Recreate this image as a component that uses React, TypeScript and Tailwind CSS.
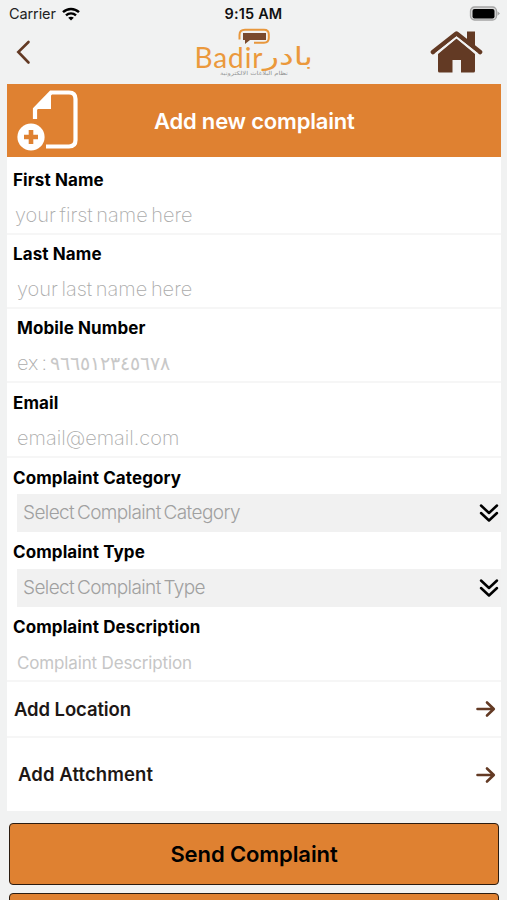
import type { ReactNode } from 'react';

type Field = {
  label: string;
  labelClass: string;
  placeholder: ReactNode;
  placeholderClass: string;
  rowClass: string;
};

const FIELDS: Field[] = [
  {
    label: 'First Name',
    labelClass: 'pl-[6px]',
    placeholder: 'your first name here',
    placeholderClass: 'pl-[8px]',
    rowClass: 'h-[77.5px] pt-[11.5px]',
  },
  {
    label: 'Last Name',
    labelClass: 'pl-[6px]',
    placeholder: 'your last name here',
    placeholderClass: 'pl-[10px] tracking-[0px]',
    rowClass: 'h-[74.5px] pt-[8.5px]',
  },
  {
    label: 'Mobile Number',
    labelClass: 'pl-[10px]',
    placeholder: (
      <>
        ex<span className="px-[3px]">:</span>
        <span className="font-['DejaVu_Sans'] text-[18.5px] font-extralight tracking-[0.15px] text-[#c8c8c8]">٩٦٦٥١٢٣٤٥٦٧٨</span>
      </>
    ),
    placeholderClass: 'pl-[10px]',
    rowClass: 'h-[74px] pt-[8px]',
  },
  {
    label: 'Email',
    labelClass: 'pl-[6px]',
    placeholder: 'email@email.com',
    placeholderClass: 'pl-[10px]',
    rowClass: 'h-[74.5px] pt-[9px]',
  },
];

const SELECTS = [
  { label: 'Complaint Category', placeholder: 'Select Complaint Category' },
  { label: 'Complaint Type', placeholder: 'Select Complaint Type' },
];

function StatusBar() {
  return (
    <div className="grid h-7 grid-cols-3 items-center pr-[6px] pl-[9px]">
      <div className="flex items-center gap-[6px]">
        <span className="text-[14.5px] tracking-[-0.1px] text-[#222]">Carrier</span>
        <svg width="18" height="14" viewBox="0 0 18 14" fill="none" stroke="#000" strokeWidth="2.4">
          <path d="M1 5.2C5.5.9 12.5.9 17 5.2" />
          <path d="M4 8.3C6.8 5.7 11.2 5.7 14 8.3" />
          <path d="M9 13.5L6.2 10.7C7.8 9.3 10.2 9.3 11.8 10.7Z" fill="#000" stroke="none" />
        </svg>
      </div>
      <span className="-ml-[3px] text-center text-[14.5px] font-semibold tracking-[0.15px] text-[#111]">9:15 AM</span>
      <svg className="justify-self-end" width="32" height="16" viewBox="0 0 32 16">
        <rect x="1.5" y="1" width="26" height="13" rx="4" fill="#d8d8d8" stroke="#a5a5a5" strokeWidth="1.3" />
        <rect x="3.5" y="3" width="22" height="9.5" rx="2" fill="#000" />
        <path d="M28.5 5.2L31 7.5L28.5 9.8Z" fill="#a5a5a5" />
      </svg>
    </div>
  );
}

function Logo() {
  return (
    <svg width="124" height="52" viewBox="192 28 124 52">
      <path
        d="M239.500 39.5V35Q239.500 29.800 245 29.800H264Q268.800 29.800 268.800 34.5V38Q268.800 42.700 264 42.700H254"
        fill="none"
        stroke="#e8973c"
        strokeWidth="2"
      />
      <path d="M243 33H266V40H250L245 44V40H243Z" fill="#7a4a2e" />
      <text x="194.5" y="67.5" fontSize="28" textLength="68" lengthAdjust="spacing" fill="#eb993c" className="font-['Lato']">
        Badir
      </text>
      <text x="263" y="65" direction="ltr" fontSize="25" textLength="50" lengthAdjust="spacingAndGlyphs" fill="#eb993c" className="font-['DejaVu_Sans']">
        بادر
      </text>
      <text x="220" y="75" direction="ltr" fontSize="5.5" textLength="68" lengthAdjust="spacingAndGlyphs" fill="#929292" className="font-['DejaVu_Sans']">
        نظام البلاغات الالكترونية
      </text>
    </svg>
  );
}

function NavBar() {
  return (
    <div className="flex h-14 items-start justify-between pr-[24px] pl-[15px]">
      <svg className="mt-[11px]" width="18" height="26" viewBox="0 0 18 26" fill="none">
        <path d="M13.5 3L3.3 13L13.5 23.5" stroke="#633a24" strokeWidth="2.6" strokeLinecap="round" />
      </svg>
      <div className="ml-[45px]">
        <Logo />
      </div>
      <svg className="mt-[1px]" width="54" height="46" viewBox="429 29 54 46">
        <path d="M467 41V31.500H475V47Z" fill="#633a24" />
        <path d="M433 52L456.5 33.5L480 52" fill="none" stroke="#633a24" strokeWidth="4.6" strokeLinecap="round" strokeLinejoin="round" />
        <path d="M438 54L456.5 38.5L475 54V71Q475 72.500 473.5 72.500H461V60H452.5V72.500H439.5Q438 72.500 438 71Z" fill="#633a24" />
        <path d="M435.5 54L456.5 37.300L477.5 54" fill="none" stroke="#f1f2f2" strokeWidth="1.7" />
      </svg>
    </div>
  );
}

function TitleBar() {
  return (
    <div className="flex h-[73px] items-center bg-[#df8131]">
      <svg width="76" height="73" viewBox="7 84 76 73">
        <path
          d="M35 119V109L51 92.5H69Q75.5 92.5 75.5 99V140Q75.5 146.5 69 146.5H46"
          fill="none"
          stroke="#fff"
          strokeWidth="4.2"
        />
        <path d="M34 109L51 91.5V109H34Z" fill="#fff" />
        <circle cx="31" cy="137" r="13.6" fill="#fff" />
        <path d="M31 130V144M24 137H38" stroke="#df8131" strokeWidth="4.6" />
      </svg>
      <h1 className="ml-[71px] pt-[1px] text-[22px] font-semibold tracking-[-0.2px] whitespace-nowrap text-white">Add new complaint</h1>
    </div>
  );
}

function FieldLabel({ children, className = '' }: { children: ReactNode; className?: string }) {
  return (
    <div className={`text-[17px] leading-[22px] font-bold tracking-[0.1px] whitespace-nowrap text-black ${className}`}>
      {children}
    </div>
  );
}

function TextField({ field }: { field: Field }) {
  return (
    <div className={`border-b-2 border-[#f6f6f6] ${field.rowClass}`}>
      <FieldLabel className={field.labelClass}>{field.label}</FieldLabel>
      <div
        dir="ltr"
        className={`mt-[10px] h-[28px] text-[20px] leading-[28px] font-extralight whitespace-nowrap text-[#ababab] [word-spacing:-2px] ${field.placeholderClass}`}
      >
        {field.placeholder}
      </div>
    </div>
  );
}

function SelectField({ label, placeholder }: { label: string; placeholder: string }) {
  return (
    <div className="flex h-[74.5px] flex-col">
      <FieldLabel className="pt-[9px] pl-[6px]">{label}</FieldLabel>
      <div className="mt-auto ml-[10px] flex h-[38px] items-center justify-between bg-[#f1f1f1] pr-[2px] pl-[6px]">
        <span className="text-[19px] leading-[24px] font-light tracking-[-0.6px] whitespace-nowrap text-[#a0a0a0] [word-spacing:-2px]">
          {placeholder}
        </span>
        <svg width="20" height="20" viewBox="0 0 20 20" fill="none" stroke="#000" strokeWidth="2.5" strokeLinecap="round" strokeLinejoin="round">
          <path d="M2 2.5L10 10L18 2.5" />
          <path d="M2 10L10 17.5L18 10" />
        </svg>
      </div>
    </div>
  );
}

function Arrow() {
  return (
    <svg width="20" height="18" viewBox="0 0 20 18" fill="none" stroke="#633a24" strokeWidth="2.6" strokeLinecap="round" strokeLinejoin="round">
      <path d="M1.5 9H17.5M11 2.5L17.8 9L11 15.5" />
    </svg>
  );
}

export default function App() {
  return (
    <div className="h-[900px] w-[507px] overflow-hidden bg-[#f1f2f2] font-['Inter','DejaVu_Sans',sans-serif] text-black">
      <StatusBar />
      <NavBar />
      <main className="pr-[6px] pl-[7px]">
        <TitleBar />
        <form className="h-[654px] bg-white">
          {FIELDS.map((field) => (
            <TextField key={field.label} field={field} />
          ))}
          {SELECTS.map((select) => (
            <SelectField key={select.label} {...select} />
          ))}
          <div className="h-[75.5px] border-b-2 border-[#f6f6f6] pt-[9px]">
            <FieldLabel className="pl-[6px]">Complaint Description</FieldLabel>
            <div className="mt-[14px] pl-[10px] text-[17px] leading-[22px] tracking-[-0.15px] whitespace-nowrap text-[#c6c6c6]">
              Complaint Description
            </div>
          </div>
          <div className="flex h-[56px] items-center justify-between border-b-2 border-[#f6f6f6] pr-[5px] pl-[7px]">
            <span className="pt-[1px] text-[18.5px] font-semibold tracking-[-0.1px] text-[#1d1715]">Add Location</span>
            <Arrow />
          </div>
          <div className="flex h-[73px] items-center justify-between pr-[5px] pl-[11px]">
            <span className="text-[18.5px] font-semibold tracking-[0.1px] text-[#1d1715]">Add Attchment</span>
            <Arrow />
          </div>
        </form>
      </main>
      <div className="mt-[12px] flex flex-col gap-[8px] pr-[8px] pl-[9px]">
        <button className="h-[62px] rounded-[4px] border-[1.5px] border-[#2b1c10] bg-[#df8131] text-[22px] font-semibold tracking-[-0.1px]">
          Send Complaint
        </button>
        <button className="h-[62px] rounded-[4px] border-[1.5px] border-[#2b1c10] bg-[#df8131]" />
      </div>
    </div>
  );
}
